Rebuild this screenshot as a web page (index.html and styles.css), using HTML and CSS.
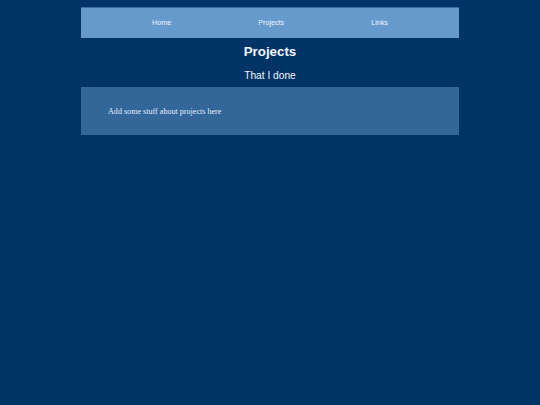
FILE: index.html
```html
<!DOCTYPE html>
<html>
<head>
<meta charset="utf-8">
<title>Projects</title>
<link rel="stylesheet" href="styles.css">
</head>
<body>
<div class="wrap">
  <nav class="nav">
    <a href="#">Home</a>
    <a href="#">Projects</a>
    <a href="#">Links</a>
  </nav>
  <h1 class="title">Projects</h1>
  <h2 class="subtitle">That I done</h2>
  <div class="content">
    <p>Add some stuff about projects here</p>
  </div>
</div>
</body>
</html>
```
FILE: styles.css
```css
html, body {
  margin: 0;
  padding: 0;
  background: #003366;
}
body {
  padding-top: 7px;
}
.wrap {
  width: 378px;
  margin: 0 auto;
}
.nav {
  height: 28px;
  padding-bottom: 2px;
  border-top: 1px solid #3d6fa6;
  background: #6699cc;
  display: flex;
  justify-content: center;
  align-items: center;
  gap: 87px;
  font-family: "Liberation Sans", Arial, sans-serif;
  font-size: 7.2px;
}
.nav a {
  color: #eef4ff;
  text-decoration: none;
}
.title {
  margin: 0;
  padding-top: 6px;
  height: 20px;
  line-height: 15px;
  text-align: center;
  font-family: "Liberation Sans", Arial, sans-serif;
  font-size: 13.3px;
  font-weight: bold;
  color: #f4f8ff;
}
.subtitle {
  margin: 0;
  height: 23px;
  line-height: 23px;
  text-align: center;
  font-family: "Liberation Sans", Arial, sans-serif;
  font-size: 10.2px;
  font-weight: normal;
  color: #f0f5ff;
}
.content {
  height: 48px;
  background: #336699;
  display: flex;
  align-items: center;
  padding-left: 27px;
}
.content p {
  margin: 0;
  font-family: "Liberation Serif", "Times New Roman", serif;
  font-size: 8.1px;
  color: #e6eefa;
}
```
